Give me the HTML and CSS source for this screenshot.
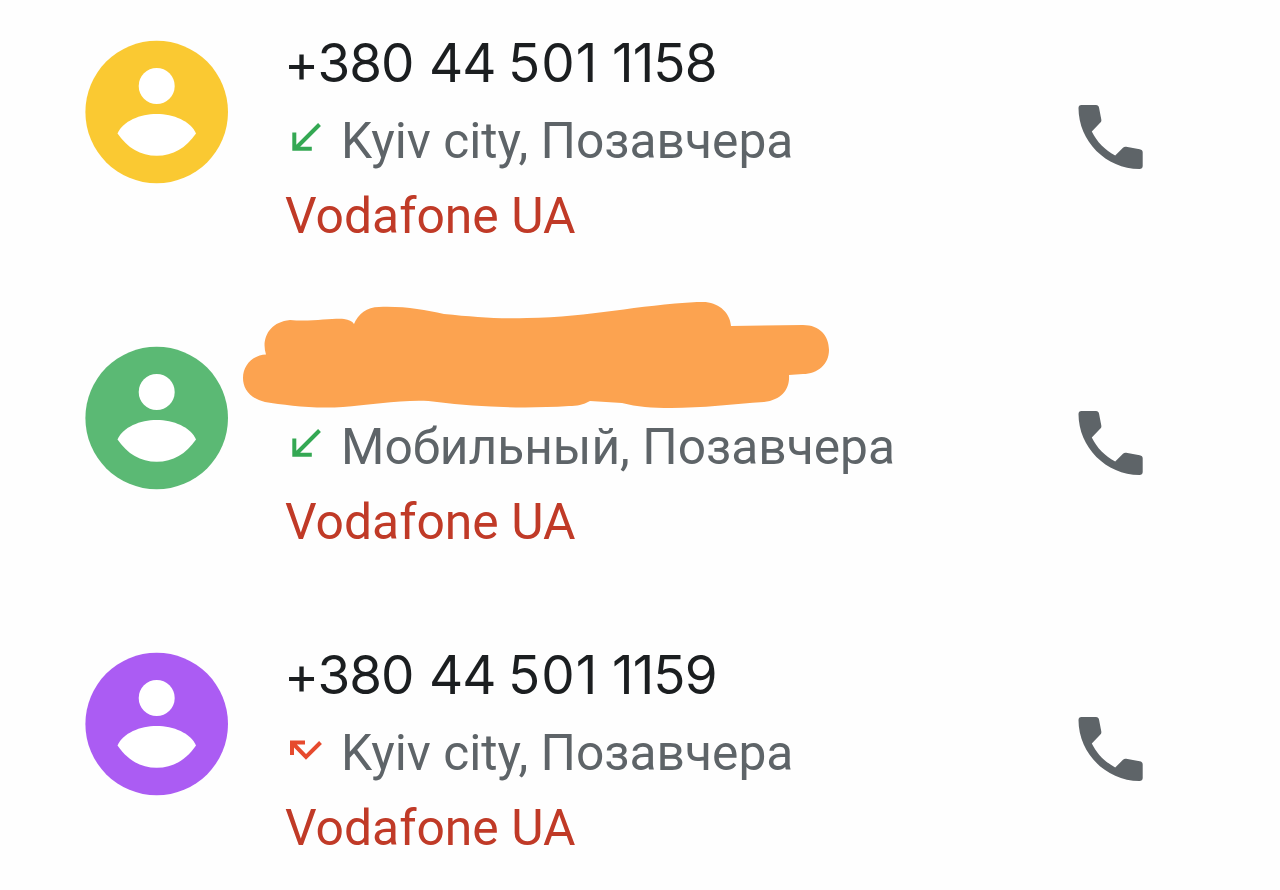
FILE: index.html
```html
<!DOCTYPE html>
<html lang="ru">

<head>
    <meta charset="UTF-8">
    <meta name="viewport" content="width=device-width, initial-scale=1.0">
    <title>Calls</title>
    <link rel="stylesheet" href="styles.css">
</head>

<body>
    <!-- shared icons -->
    <svg class="symbols" aria-hidden="true">
        <symbol id="person" viewBox="0 0 144 144">
            <circle cx="71.700" cy="72" r="71.3" />
            <circle cx="71.700" cy="46" r="18" fill="#fff" />
            <path fill="#fff" d="M32.500 93.500C38 81 55 74 71.700 74s34 7 39.300 19.500C101 108 88 115.800 71.700 115.800S42.500 108 32.500 93.500z" />
        </symbol>
        <symbol id="phone" viewBox="0 0 66 66">
            <path d="M4.500 1h14.500c1.700 0 2.700 .900 3 2.600L24.300 15.500c.200 1.300 0 2.200-.900 3.100L14.800 27.500C20 38 27.500 45.500 38.200 51.500L46 43.800c.900-.900 1.900-1.200 3.200-1L62.700 45.200c2 .400 3 1.400 3 3.200V62c0 2-1.200 3-3.300 3C29 65 1.500 37 1.500 4 1.500 2 2.500 1 4.500 1z" />
        </symbol>
        <symbol id="incoming" viewBox="0 0 34 34">
            <path d="M30.500 5.500L6 30M5.300 13.500V29.800h17.500" />
        </symbol>
        <symbol id="missed" viewBox="0 0 34 34">
            <path d="M31.500 11.500L17 26 4 12.500M3 24V11.500h13" />
        </symbol>
    </svg>

    <main class="calls">
        <article class="call">
            <svg class="avatar yellow"><use href="#person" /></svg>
            <div class="info">
                <div class="number"><span>+380</span><span>44</span><span>501</span><span>1158</span></div>
                <div class="details">
                    <svg class="direction incoming"><use href="#incoming" /></svg>
                    <span>Kyiv city, Позавчера</span>
                </div>
                <div class="carrier">Vodafone UA</div>
            </div>
            <svg class="phone"><use href="#phone" /></svg>
        </article>

        <article class="call">
            <svg class="avatar green"><use href="#person" /></svg>
            <div class="info">
                <div class="number">
                    <svg class="scribble" viewBox="0 0 590 110">
                        <path d="M24 52.500C19 37 27 20 48 18C68 20 91 16 102 17C107 18 110 19 112 22C116 12 125 5 137 5C163 4 182 8 202 12C232 15 256 17 285 16C350 15 395 3 455 0C474-2 488 9 489 24L561 23C578 23 587 34 587 48S576 72 561 72L547 73C548 87 540 98 522 100C492 102 460 106 429 106C410 106 395 105 380 101L348 99C341 103 335 104 327 104C280 107 235 105 195 100C170 96 130 103 101 105C70 107 43 103 23 100C7 96 1 86 1 76C1 63 11 53 24 52.500z" />
                    </svg>
                </div>
                <div class="details">
                    <svg class="direction incoming"><use href="#incoming" /></svg>
                    <span>Мобильный, Позавчера</span>
                </div>
                <div class="carrier">Vodafone UA</div>
            </div>
            <svg class="phone"><use href="#phone" /></svg>
        </article>

        <article class="call">
            <svg class="avatar purple"><use href="#person" /></svg>
            <div class="info">
                <div class="number"><span>+380</span><span>44</span><span>501</span><span>1159</span></div>
                <div class="details">
                    <svg class="direction missed"><use href="#missed" /></svg>
                    <span>Kyiv city, Позавчера</span>
                </div>
                <div class="carrier">Vodafone UA</div>
            </div>
            <svg class="phone"><use href="#phone" /></svg>
        </article>
    </main>
</body>

</html>
```

FILE: styles.css
```css
* {
    box-sizing: border-box;
}

body {
    margin: 0;
    background: #fefefe;
    font-family: Roboto, sans-serif;
    overflow: hidden;
}

.symbols {
    display: none;
}

.calls {
    height: 890px;
    overflow: hidden;
}

.call {
    display: grid;
    grid-template-columns: 144px 1fr 66px;
    column-gap: 56px;
    height: 306px;
    padding: 28px 137px 0 85px;
}

.avatar {
    width: 144px;
    height: 144px;
    margin-top: 12px;
}

.yellow {
    fill: #fac932;
}

.green {
    fill: #5bb974;
}

.purple {
    fill: #ab5cf3;
}

.number {
    position: relative;
    display: grid;
    grid-template-columns: 144px 79px 104px 120px;
    height: 76px;
    line-height: 71px;
    font-family: Inter, sans-serif;
    font-size: 53px;
    color: #1b1e20;
}

.number span:nth-child(1) {
    margin-left: -1px;
    letter-spacing: -1px;
}

.number span:nth-child(2),
.number span:nth-child(4) {
    letter-spacing: -0.9px;
}

.number span:nth-child(3) {
    letter-spacing: 1px;
}

.scribble {
    position: absolute;
    left: -43px;
    top: -32px;
    width: 590px;
    height: 110px;
    fill: #fca350;
}

.details {
    display: flex;
    height: 75px;
    line-height: 75px;
    font-size: 49.7px;
    color: #5e6468;
    white-space: nowrap;
}

.direction {
    flex: none;
    width: 34px;
    height: 34px;
    margin: 15px 18px 0 4px;
    fill: none;
    stroke-width: 4;
}

.incoming {
    stroke: #34a853;
}

.missed {
    stroke: #e64a2e;
}

.carrier {
    line-height: 75px;
    font-size: 49.8px;
    color: #c03a27;
}

.phone {
    width: 66px;
    height: 66px;
    margin-top: 76px;
    fill: #5e6468;
}
```
